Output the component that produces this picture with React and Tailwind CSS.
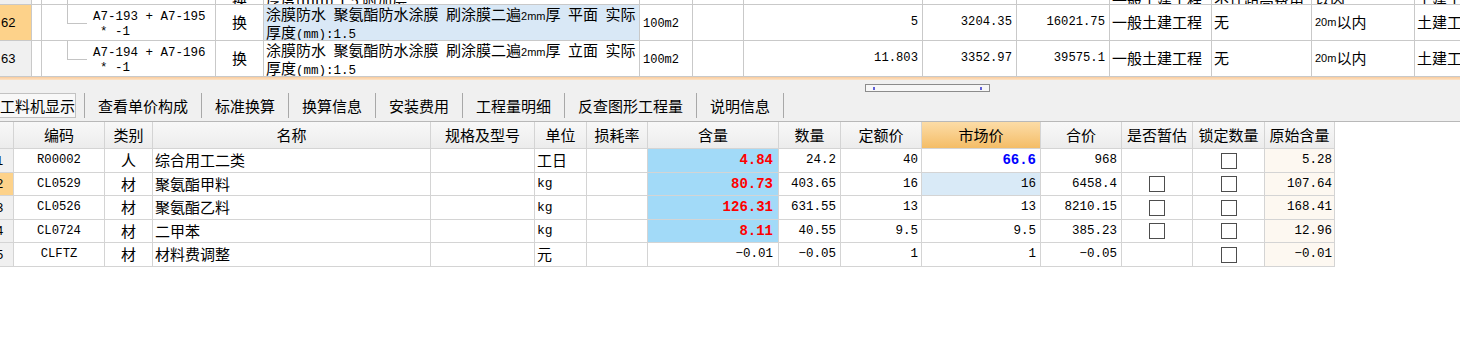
import React from "react";

const MONO = "font-['Liberation_Mono','Noto_Sans_CJK_SC',monospace]";
const CJK = "font-['Noto_Sans_CJK_SC',sans-serif]";
const SANS = "font-['Liberation_Sans',sans-serif]";

const topCols =
  "grid grid-cols-[32px_10px_174px_48px_376px_53px_51px_179px_94px_93px_102px_100px_103px_60px]";
const tc = "border-r border-b border-[#c9c9c9] flex items-center overflow-hidden whitespace-nowrap";

const botCols =
  "grid grid-cols-[14px_91px_48px_278px_104px_52px_61px_131px_62px_81px_119px_81px_71px_72px_70px] w-[1335px]";
const bc = "border-r border-b border-[#d4d4d4] flex items-center overflow-hidden whitespace-nowrap";

function Sp() {
  return <span className="inline-block w-[7.5px]" />;
}

function Small({ children }) {
  return <span className={`text-[11px] ${SANS}`}>{children}</span>;
}

function TopRow({ num, numBg, code, side, nameBg, qty, price, total }) {
  return (
    <div className={`${topCols} h-[36px]`}>
      <div className={`${tc} ${numBg} text-[13px] ${SANS} pl-[1px]`}>{num}</div>
      <div className={`${tc} bg-white`} />
      <div className={`${tc} bg-white !items-start`}>
        <div className="ml-[25px] w-[20px] h-[19px] border-l border-b border-[#c4c4c4] shrink-0" />
        <div className={`ml-[6px] pt-[5px] leading-[15px] text-[12.5px] ${MONO}`}>
          <div>{code}</div>
          <div className="pl-[7px]">* -1</div>
        </div>
      </div>
      <div className={`${tc} bg-white justify-center text-[15px] ${CJK}`}>换</div>
      <div className={`${tc} ${nameBg} !items-start pl-[2px] pt-[1px] text-[15px] leading-[15px] ${CJK}`}>
        <div>
          <div>
            涂膜防水
            <Sp />
            聚氨酯防水涂膜
            <Sp />
            刷涂膜二遍<Small>2mm</Small>厚
            <Sp />
            {side}
            <Sp />
            实际
          </div>
          <div>
            厚度<span className={`text-[12.5px] ${MONO}`}>(mm):1.5</span>
          </div>
        </div>
      </div>
      <div className={`${tc} bg-white pl-[3px] pt-[2px] text-[12px] ${MONO}`}>100m2</div>
      <div className={`${tc} bg-white`} />
      <div className={`${tc} bg-white justify-end pr-[4px] text-[12.2px] ${MONO}`}>{qty}</div>
      <div className={`${tc} bg-white justify-end pr-[4px] text-[12.2px] ${MONO}`}>{price}</div>
      <div className={`${tc} bg-white justify-end pr-[4px] text-[12.2px] ${MONO}`}>{total}</div>
      <div className={`${tc} bg-white pl-[2px] text-[15px] ${CJK}`}>一般土建工程</div>
      <div className={`${tc} bg-white pl-[2px] text-[15px] ${CJK}`}>无</div>
      <div className={`${tc} bg-white pl-[3px] text-[15px] ${CJK}`}>
        <Small>20m</Small>以内
      </div>
      <div className={`${tc} bg-white pl-[2px] text-[15px] ${CJK}`}>土建工程</div>
    </div>
  );
}

function PartialRow() {
  const cell = `${tc} bg-white !items-end text-[15px] leading-[8px] ${CJK}`;
  return (
    <div className={`${topCols} h-[36px] mt-[-31px]`}>
      <div className={`${tc} bg-[#f0f0f0]`} />
      <div className={`${tc} bg-white`} />
      <div className={`${tc} bg-white !items-stretch`}>
        <div className="ml-[25px] w-px bg-[#c4c4c4]" />
      </div>
      <div className={`${cell} justify-center`}>换</div>
      <div className={`${cell} pl-[2px]`}>厚度(mm):1.5 附加层</div>
      <div className={`${tc} bg-white`} />
      <div className={`${tc} bg-white`} />
      <div className={`${tc} bg-white`} />
      <div className={`${tc} bg-white`} />
      <div className={`${tc} bg-white`} />
      <div className={`${cell} pl-[2px]`}>一般土建工程</div>
      <div className={`${cell} pl-[2px]`}>不计超高费用</div>
      <div className={`${cell} pl-[3px]`}>以内</div>
      <div className={`${cell} pl-[2px]`}>土建工程</div>
    </div>
  );
}

function Check() {
  return <div className="w-[16px] h-[16px] border border-[#4d4d4d] bg-white" />;
}

const tabs = ["查看单价构成", "标准换算", "换算信息", "安装费用", "工程量明细", "反查图形工程量", "说明信息"];

const headers = [
  "",
  "编码",
  "类别",
  "名称",
  "规格及型号",
  "单位",
  "损耗率",
  "含量",
  "数量",
  "定额价",
  "市场价",
  "合价",
  "是否暂估",
  "锁定数量",
  "原始含量",
];

const rows = [
  { n: "1", code: "R00002", cat: "人", name: "综合用工二类", unit: "工日", unitCjk: true, hl: "4.84", hlBlue: true, qty: "24.2", dj: "40", sc: "66.6", scBold: true, hj: "968", zg: false, orig: "5.28", h: "h-[24px]" },
  { n: "2", sel: true, code: "CL0529", cat: "材", name: "聚氨酯甲料", unit: "kg", hl: "80.73", hlBlue: true, qty: "403.65", dj: "16", sc: "16", scSel: true, hj: "6458.4", zg: true, orig: "107.64", h: "h-[23px]" },
  { n: "3", code: "CL0526", cat: "材", name: "聚氨酯乙料", unit: "kg", hl: "126.31", hlBlue: true, qty: "631.55", dj: "13", sc: "13", hj: "8210.15", zg: true, orig: "168.41", h: "h-[24px]" },
  { n: "4", code: "CL0724", cat: "材", name: "二甲苯", unit: "kg", hl: "8.11", hlBlue: true, qty: "40.55", dj: "9.5", sc: "9.5", hj: "385.23", zg: true, orig: "12.96", h: "h-[23px]" },
  { n: "5", code: "CLFTZ", cat: "材", name: "材料费调整", unit: "元", unitCjk: true, hl: "−0.01", hlBlue: false, qty: "−0.05", dj: "1", sc: "1", hj: "−0.05", zg: false, orig: "−0.01", h: "h-[24px]" },
];

export default function App() {
  const num = `text-[12.5px] ${MONO}`;
  return (
    <div className="w-[1460px] h-[355px] overflow-hidden bg-white text-black">
      {/* upper grid */}
      <div className="h-[77px] overflow-hidden">
        <PartialRow />
        <TopRow
          num="62"
          numBg="bg-[#fdd28a]"
          code="A7-193 + A7-195"
          side="平面"
          nameBg="bg-[#d9e8f6]"
          qty="5"
          price="3204.35"
          total="16021.75"
        />
        <TopRow
          num="63"
          numBg="bg-[#f0f0f0]"
          code="A7-194 + A7-196"
          side="立面"
          nameBg="bg-white"
          qty="11.803"
          price="3352.97"
          total="39575.1"
        />
      </div>
      <div className="h-[3px] bg-linear-to-b from-[#f9cb9c] to-[#fde3c6]" />

      {/* tab bar */}
      <div className="h-[42px] bg-[#f0f0f0] border-b border-[#b8b8b8] flex flex-col">
        <div className="mt-[4px] ml-[865px] w-[125px] h-[8px] border border-[#8c8c8c] bg-[#f7f7f7] flex items-center justify-between px-[7px]">
          <span className="w-[2px] h-[3px] bg-[#6060d8]" />
          <span className="w-[2px] h-[3px] bg-[#6060d8]" />
        </div>
        <div className={`mt-[1px] h-[25px] flex items-stretch text-[15px] leading-none ${CJK}`}>
          <div className="w-[76px] border-y border-r border-[#c2c2c2] bg-[#f8f8f8] flex items-center justify-center">
            工料机显示
          </div>
          <div className="ml-[8px] w-px bg-[#a8a8a8]" />
          {tabs.map((t) => (
            <React.Fragment key={t}>
              <div className="px-[13px] flex items-center">{t}</div>
              <div className="w-px bg-[#a8a8a8]" />
            </React.Fragment>
          ))}
        </div>
      </div>

      {/* lower grid */}
      <div className={`${botCols} h-[27px]`}>
        {headers.map((h, i) => (
          <div
            key={i}
            className={`${bc} justify-center text-[15px] ${CJK} bg-linear-to-b ${
              h === "市场价" ? "from-[#fcdca6] to-[#f4bd66]" : "from-[#f8f8f8] to-[#ececec]"
            }`}
          >
            {h}
          </div>
        ))}
      </div>
      {rows.map((r) => (
        <div key={r.n} className={`${botCols} ${r.h}`}>
          <div className={`${bc} ${r.sel ? "bg-[#fdd28a]" : "bg-[#f0f0f0]"} text-[13px] ${SANS}`}>
            <span className="-ml-[4px]">{r.n}</span>
          </div>
          <div className={`${bc} justify-center text-[12.2px] ${MONO}`}>{r.code}</div>
          <div className={`${bc} justify-center text-[15px] ${CJK}`}>{r.cat}</div>
          <div className={`${bc} pl-[2px] text-[15px] ${CJK}`}>{r.name}</div>
          <div className={`${bc}`} />
          <div className={`${bc} pl-[2px] ${r.unitCjk ? `text-[15px] ${CJK}` : `text-[13px] ${MONO}`}`}>
            {r.unit}
          </div>
          <div className={`${bc}`} />
          <div
            className={`${bc} justify-end pr-[5px] ${
              r.hlBlue ? `bg-[#a2daf8] text-[#ff0000] font-bold text-[14px] ${MONO}` : num
            }`}
          >
            {r.hl}
          </div>
          <div className={`${bc} justify-end pr-[4px] ${num}`}>{r.qty}</div>
          <div className={`${bc} justify-end pr-[3px] ${num}`}>{r.dj}</div>
          <div
            className={`${bc} justify-end pr-[4px] ${r.scSel ? "bg-[#d9eaf7]" : ""} ${
              r.scBold ? `text-[#0000ff] font-bold text-[14px] ${MONO}` : num
            }`}
          >
            {r.sc}
          </div>
          <div className={`${bc} justify-end pr-[4px] ${num}`}>{r.hj}</div>
          <div className={`${bc} justify-center`}>{r.zg ? <Check /> : null}</div>
          <div className={`${bc} justify-center`}>
            <Check />
          </div>
          <div className={`${bc} justify-end pr-[2px] bg-[#fdf8f1] ${num}`}>{r.orig}</div>
        </div>
      ))}
    </div>
  );
}
